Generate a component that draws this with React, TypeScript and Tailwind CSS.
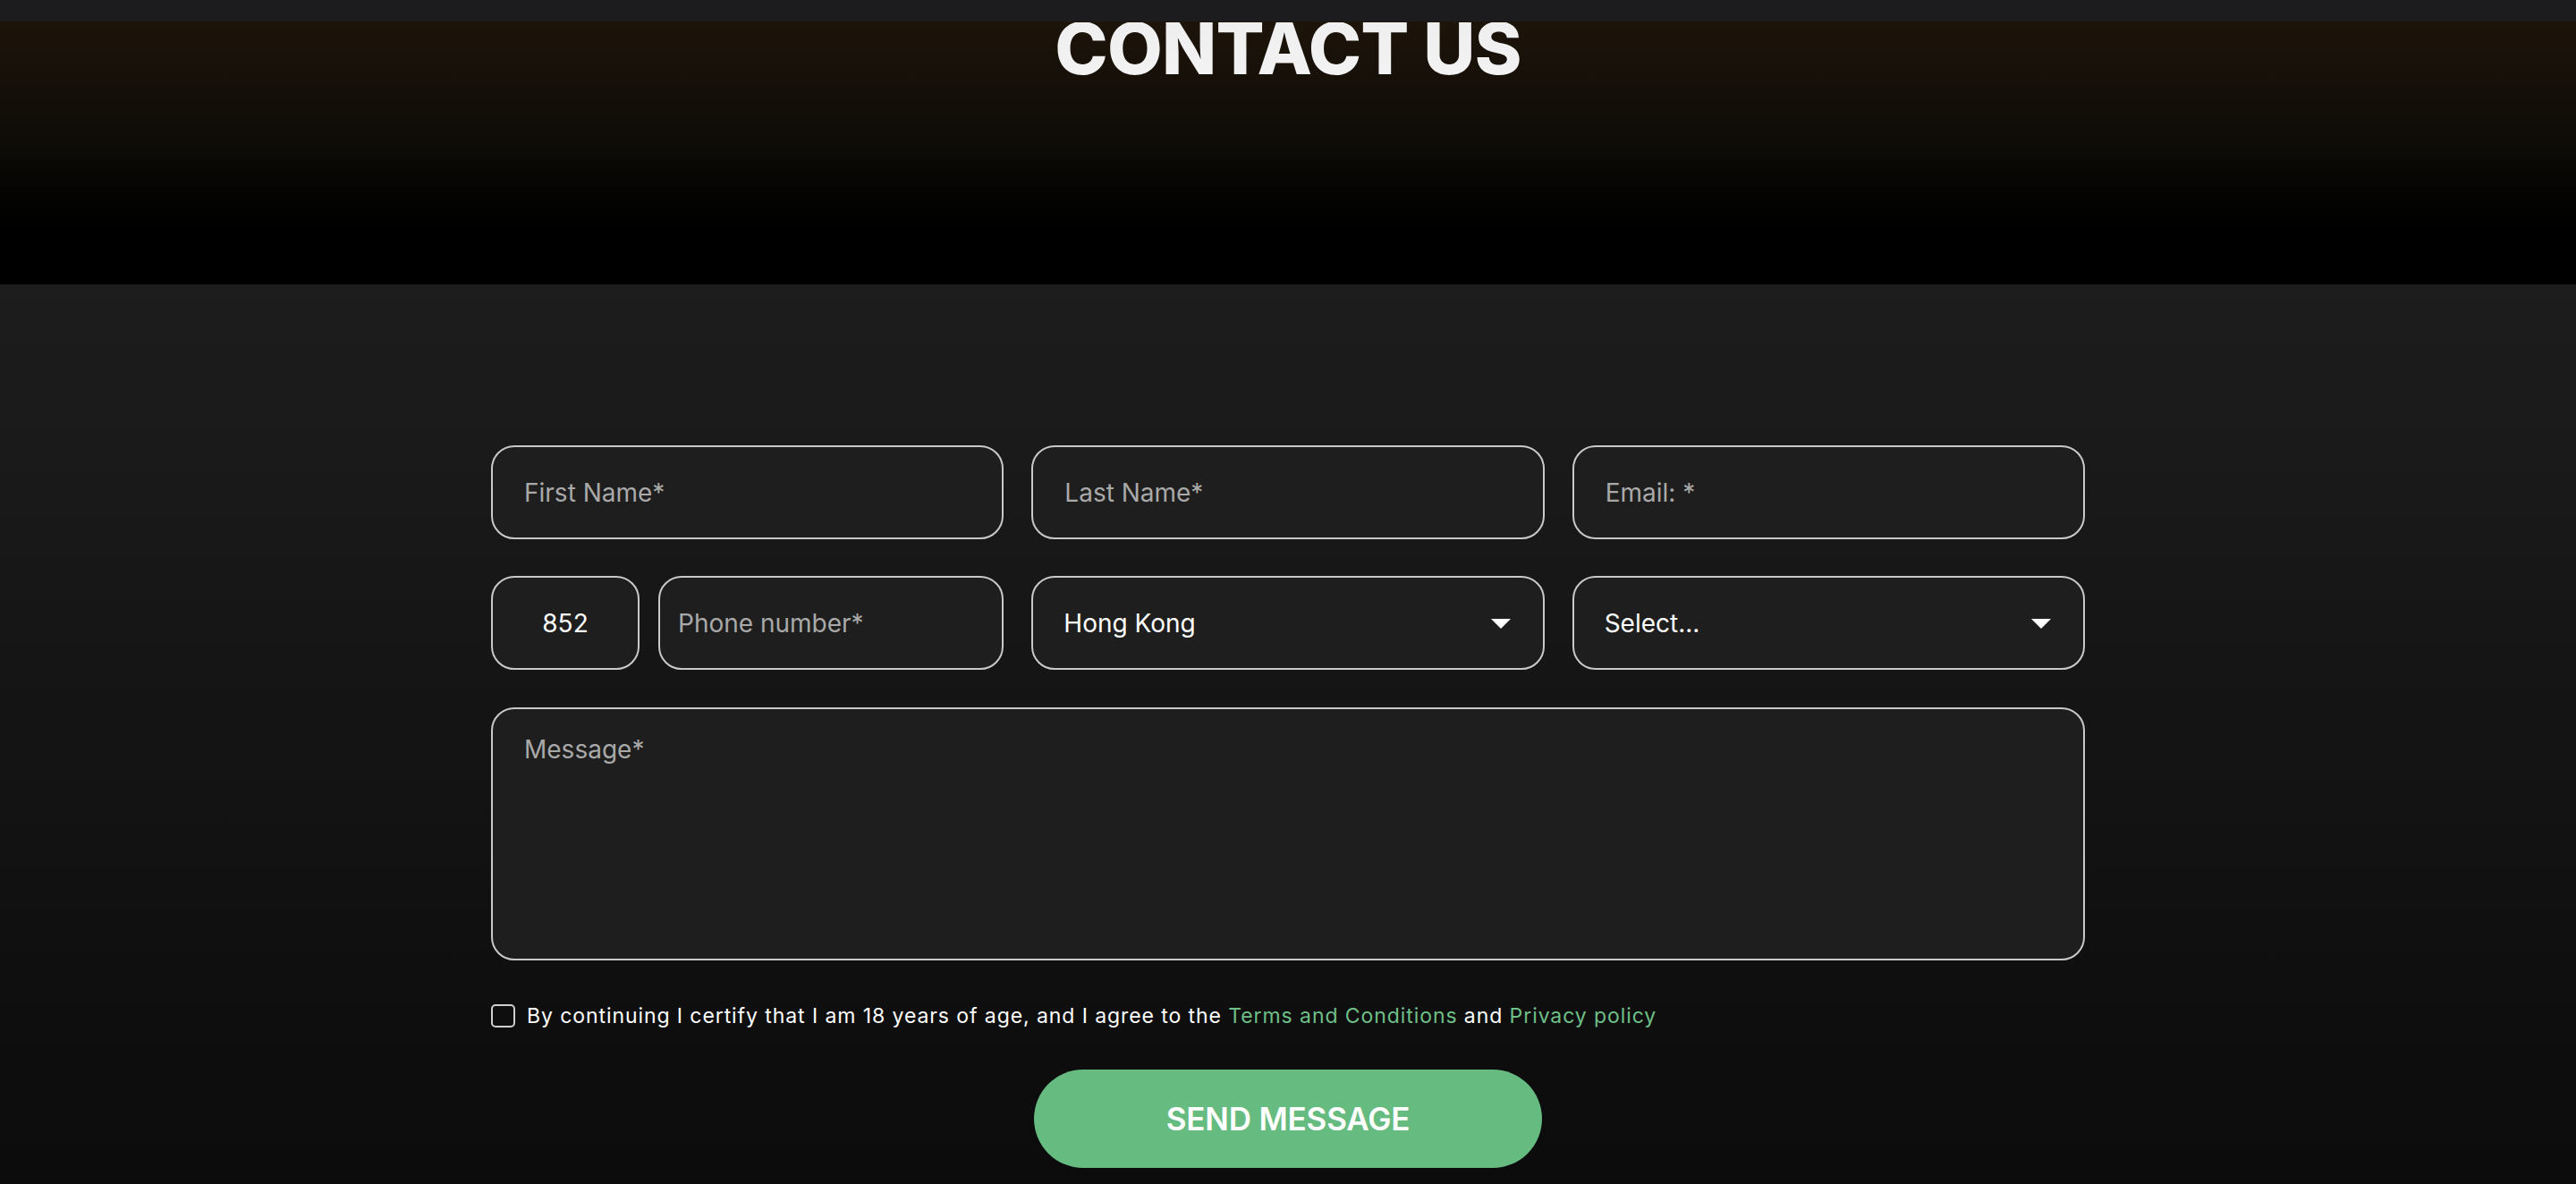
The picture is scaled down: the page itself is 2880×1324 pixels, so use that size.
import React from "react";

function Field({
  text,
  value = false,
  className = "",
  pad = "pl-[35px]",
}: {
  text: string;
  value?: boolean;
  className?: string;
  pad?: string;
}) {
  return (
    <div
      className={`flex h-[105px] items-center rounded-[26px] border-2 border-[#c9c9c9] bg-[#1e1e1e] ${pad} ${className}`}
    >
      <span className={`text-[28px] leading-none ${value ? "text-white" : "text-[#a9a9a9]"}`}>{text}</span>
    </div>
  );
}

function SelectField({ text }: { text: string }) {
  return (
    <div className="flex h-[105px] items-center justify-between rounded-[26px] border-2 border-[#c9c9c9] bg-[#1e1e1e] pl-[34px] pr-[36px]">
      <span className="text-[28px] leading-none text-white">{text}</span>
      <svg width="22" height="11" viewBox="0 0 22 11" className="mt-[2px]">
        <path d="M0 0 H22 L11 11 Z" fill="#ffffff" />
      </svg>
    </div>
  );
}

export default function App() {
  return (
    <div className="min-h-[1324px] w-full bg-[#0b0b0b] font-['Inter',sans-serif] text-white">
      <div className="h-[24px] bg-[#1c1c1e]" />
      <section className="flex h-[294px] justify-center bg-linear-to-b from-[#1d140a] via-[#0d0b07] to-black">
        <h1 className="mt-[1px] bg-linear-to-b from-[#efefef] to-white bg-clip-text text-[80px] font-extrabold leading-[58px] tracking-[-0.01em] text-transparent">
          CONTACT US
        </h1>
      </section>
      <section className="bg-linear-to-b from-[#1d1d1d] to-[#0b0b0b] pb-[30px] pt-[180px]">
        <div className="mx-auto flex w-[1782px] flex-col">
          <div className="grid grid-cols-3 gap-x-[31px] gap-y-[41px]">
            <Field text="First Name*" />
            <Field text="Last Name*" />
            <Field text="Email: *" />
            <div className="flex gap-[21px]">
              <Field text="852" value className="w-[166px] justify-center" pad="pl-0" />
              <Field text="Phone number*" className="flex-1" pad="pl-[20px]" />
            </div>
            <SelectField text="Hong Kong" />
            <SelectField text="Select..." />
          </div>
          <div className="mt-[42px] h-[283px] rounded-[26px] border-2 border-[#c9c9c9] bg-[#1e1e1e] pl-[35px] pt-[24px]">
            <span className="text-[28px] leading-[42px] text-[#a9a9a9]">Message*</span>
          </div>
          <div className="mt-[49px] flex h-[26px] items-center gap-[13px]">
            <div className="h-[26px] w-[27px] rounded-[5px] border-2 border-[#cfcfcf]" />
            <p className="text-[23px] leading-none tracking-[0.04em] text-white">
              By continuing I certify that I am 18 years of age, and I agree to the{" "}
              <a className="text-[#6fbf88]">Terms and Conditions</a> and{" "}
              <a className="text-[#6fbf88]">Privacy policy</a>
            </p>
          </div>
          <div className="mt-[47px] flex justify-center">
            <button className="flex h-[110px] w-[568px] items-center justify-center rounded-full bg-[#66bb80]">
              <span className="text-[35px] font-semibold leading-none tracking-[-0.005em] text-white">
                SEND MESSAGE
              </span>
            </button>
          </div>
        </div>
      </section>
    </div>
  );
}
